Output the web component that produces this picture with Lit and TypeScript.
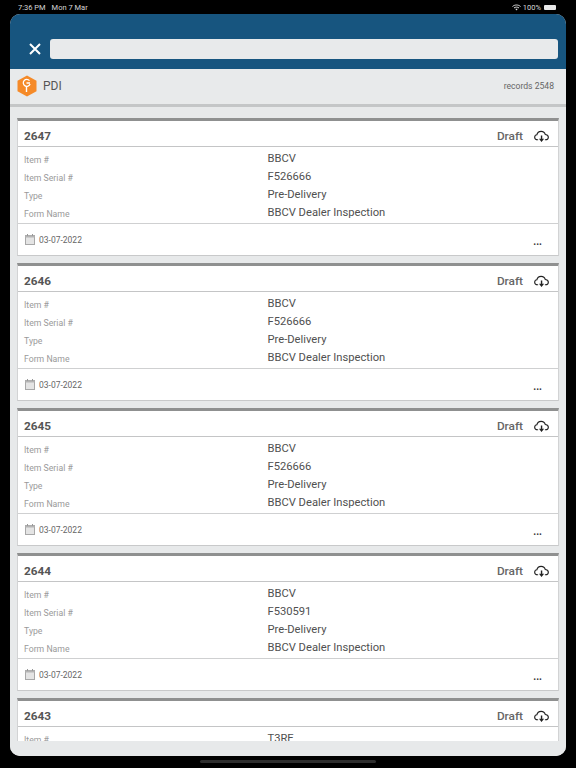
import { LitElement, html, css, svg } from "lit";
import { customElement } from "lit/decorators.js";

const cards = [
  { id: "2647", serial: "F526666", item: "BBCV" },
  { id: "2646", serial: "F526666", item: "BBCV" },
  { id: "2645", serial: "F526666", item: "BBCV" },
  { id: "2644", serial: "F530591", item: "BBCV" },
  { id: "2643", serial: "", item: "T3RE" },
];

const cloud = svg`<svg class="cloud" width="15" height="13" viewBox="0 0 16 13" fill="none">
  <path d="M4.400 10H3.600C1.900 10 .7 8.800.7 7.300c0-1.400 1-2.500 2.400-2.700C3.500 2.500 5.300 1 7.600 1c2.200 0 3.900 1.300 4.400 3.300 1.900.1 3.300 1.400 3.300 3 0 1.600-1.300 2.700-3 2.700h-.7" stroke="#222" stroke-width="1.200"/>
  <path d="M7.300 5.500h1.500v3.500h2L8 12.300 5.300 9h2z" fill="#222"/>
</svg>`;

@customElement("app-root")
export class AppRoot extends LitElement {
  static styles = css`
    :host {
      display: block;
      width: 576px;
      height: 768px;
      background: #000;
      overflow: hidden;
      font-family: Roboto, "Liberation Sans", sans-serif;
      position: relative;
    }
    .status {
      height: 14px;
      display: flex;
      align-items: center;
      justify-content: space-between;
      padding: 0 20px 0 18px;
      color: #d8d8d8;
      font-size: 7.5px;
      box-sizing: border-box;
    }
    .status .left { display: flex; gap: 6px; }
    .status .right { display: flex; align-items: center; gap: 2px; }
    .battery {
      width: 12px;
      height: 5px;
      background: #e8e8e8;
      border-radius: 1px;
      margin-left: 1px;
    }
    .window {
      margin: 0 10px;
      height: 742px;
      border-radius: 10px;
      overflow: hidden;
      background: #e7e9ea;
      display: flex;
      flex-direction: column;
    }
    .top {
      height: 55px;
      flex: none;
      background: #17557f;
      box-sizing: border-box;
      padding: 25px 8px 10px 19px;
      display: flex;
      align-items: center;
      gap: 9px;
    }
    .close { width: 12px; height: 12px; flex: none; }
    .search {
      flex: 1;
      height: 20px;
      background: #e8eaeb;
      border-radius: 3px;
    }
    .sub {
      height: 34px;
      flex: none;
      display: flex;
      align-items: center;
      padding: 0 12px 1px 7px;
      background: #e8eaeb;
      border-bottom: 3px solid #c4c6c7;
      box-sizing: content-box;
    }
    .logo { width: 20px; height: 22px; flex: none; }
    .title { margin-left: 6px; font-size: 12px; color: #555; flex: 1; }
    .records { font-size: 8.6px; color: #666; }
    .list {
      flex: 1;
      min-height: 0;
      overflow: hidden;
      padding: 11px 7px 0;
      display: flex;
      flex-direction: column;
      gap: 7px;
    }
    .card {
      flex: none;
      height: 138px;
      box-sizing: border-box;
      background: #fff;
      border-top: 3px solid #8f9090;
      border-left: 1px solid #d2d3d4;
      border-right: 1px solid #d2d3d4;
      border-bottom: 1px solid #c8c9ca;
      display: flex;
      flex-direction: column;
    }
    .head {
      height: 26px;
      flex: none;
      box-sizing: border-box;
      display: flex;
      align-items: center;
      padding: 4px 9px 0 6px;
      border-bottom: 1px solid #c4c5c6;
    }
    .id { flex: 1; font-size: 11.8px; font-weight: 700; color: #555; }
    .draft { font-size: 11.8px; font-weight: 500; color: #666; margin-right: 11px; }
    .cloud { flex: none; margin-top: 2px; }
    .rows {
      height: 77px;
      flex: none;
      box-sizing: border-box;
      padding-top: 2px;
      border-bottom: 1px solid #cfd0d1;
    }
    .row {
      height: 18px;
      display: grid;
      grid-template-columns: 243.5px 1fr;
      padding-left: 6px;
    }
    .label { font-size: 8.7px; color: #9a9a9a; padding-top: 5px; line-height: 12px; }
    .value { font-size: 11.2px; font-weight: 400; color: #505050; line-height: 14px; padding-top: 3px; }
    .foot {
      flex: 1;
      display: flex;
      align-items: center;
      padding: 0 16px 0 7px;
      gap: 4px;
    }
    .cal { width: 10px; height: 11px; flex: none; }
    .date { flex: 1; font-size: 8.5px; color: #666; }
    .dots { font-size: 10px; color: #333; font-weight: 700; line-height: 10px; padding-top: 4px; }
    .bottom { height: 15px; flex: none; background: #e7e9ea; }
    .home {
      width: 176px;
      height: 3px;
      margin: 4px auto 0;
      border-radius: 2px;
      background: #2e2e2e;
    }
  `;

  render() {
    return html`
      <div class="status">
        <div class="left"><span>7:36 PM</span><span>Mon 7 Mar</span></div>
        <div class="right">
          <svg width="9" height="7" viewBox="0 0 9 7" fill="none" stroke="#e0e0e0" stroke-width="1">
            <path d="M.5 2.500C2.700.5 6.300.5 8.500 2.500M2 4c1.400-1.200 3.600-1.200 5 0"/>
            <path d="M3.300 5.100 4.500 6.600 5.700 5.100c-.7-.5-1.700-.5-2.400 0z" fill="#e0e0e0" stroke="none"/>
          </svg>
          <span>100%</span>
          <div class="battery"></div>
        </div>
      </div>
      <div class="window">
        <div class="top">
          <svg class="close" viewBox="0 0 12 12" fill="none" stroke="#fff" stroke-width="2">
            <path d="M1 1l10 10M11 1L1 11"/>
          </svg>
          <div class="search"></div>
        </div>
        <div class="sub">
          <svg class="logo" viewBox="0 0 20 22">
            <path d="M10 .5l9.500 5.200v10.600L10 21.500.5 16.300V5.700z" fill="#f58a28"/>
            <path d="M12.500 5.600a3.500 3.500 0 1 0 .6 3.400" fill="none" stroke="#fff" stroke-width="1.300"/>
            <path d="M9.500 8h3.500M9.500 11.500V17" stroke="#fff" stroke-width="1.400" fill="none"/>
          </svg>
          <div class="title">PDI</div>
          <div class="records">records 2548</div>
        </div>
        <div class="list">
          ${cards.map(
            (c) => html`
              <div class="card">
                <div class="head">
                  <div class="id">${c.id}</div>
                  <div class="draft">Draft</div>
                  ${cloud}
                </div>
                <div class="rows">
                  <div class="row"><div class="label">Item #</div><div class="value">${c.item}</div></div>
                  <div class="row"><div class="label">Item Serial #</div><div class="value">${c.serial}</div></div>
                  <div class="row"><div class="label">Type</div><div class="value">Pre-Delivery</div></div>
                  <div class="row"><div class="label">Form Name</div><div class="value">BBCV Dealer Inspection</div></div>
                </div>
                <div class="foot">
                  <svg class="cal" viewBox="0 0 10 11">
                    <rect x=".5" y="1.500" width="9" height="9" fill="#e4e4e4" stroke="#a8a8a8"/>
                    <rect x=".5" y="1.500" width="9" height="2" fill="#b4b4b4"/>
                    <path d="M2.500 0v2M7.500 0v2" stroke="#999"/>
                  </svg>
                  <div class="date">03-07-2022</div>
                  <div class="dots">...</div>
                </div>
              </div>
            `
          )}
        </div>
        <div class="bottom"></div>
      </div>
      <div class="home"></div>
    `;
  }
}
